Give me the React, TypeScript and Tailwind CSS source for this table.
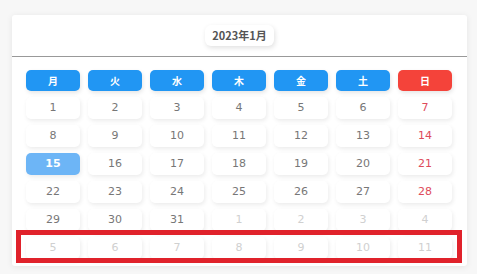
const weekdays = [
  { label: "月", sunday: false },
  { label: "火", sunday: false },
  { label: "水", sunday: false },
  { label: "木", sunday: false },
  { label: "金", sunday: false },
  { label: "土", sunday: false },
  { label: "日", sunday: true },
];

type Day = { n: number; inMonth: boolean };

// 31 days of the month, then next month's days fill out 6 rows
const buildDays = (): Day[] => {
  const days: Day[] = [];
  for (let i = 1; i <= 31; i++) days.push({ n: i, inMonth: true });
  let next = 1;
  while (days.length < 42) days.push({ n: next++, inMonth: false });
  return days;
};

const App = () => {
  const days = buildDays();

  return (
    <div className="h-[274px] w-[477px] overflow-hidden bg-[#f7f7f7] pt-[15px] pl-[12px] font-['DejaVu_Sans','Noto_Sans_CJK_JP',sans-serif]">
      <div className="relative h-[251px] w-[455px] rounded-[3px] bg-white shadow-[0_1px_6px_rgba(0,0,0,0.08)]">
        <div className="flex h-[41px] items-center justify-center">
          <span className="rounded-[6px] bg-white px-[7px] py-[2px] text-[11px] font-bold text-[#555] shadow-[1px_2px_5px_rgba(0,0,0,0.12)] font-['Noto_Sans_CJK_JP',sans-serif]">
            2023年1月
          </span>
        </div>
        <div className="h-[1px] bg-[#999]"></div>

        <div className="grid grid-cols-7 gap-x-[8px] gap-y-[6px] pt-[13px] pl-[14px] pr-[15px]">
          {weekdays.map((w) => (
            <div
              key={w.label}
              className={`flex h-[21px] items-center justify-center rounded-[5px] text-[10px] font-bold text-white shadow-[1px_2px_4px_rgba(0,0,0,0.1)] font-['Noto_Sans_CJK_JP',sans-serif] ${
                w.sunday ? "bg-[#f4433a]" : "bg-[#2196f3]"
              }`}
            >
              {w.label}
            </div>
          ))}
          {days.map((d, i) => {
            const sunday = i % 7 === 6;
            const today = d.inMonth && d.n === 15;
            let cls = "bg-white text-[#777]";
            if (today) cls = "bg-[#6db5f6] text-white font-bold";
            else if (!d.inMonth) cls = "bg-white text-[#d0d0d0]";
            else if (sunday) cls = "bg-white text-[#de4b5b]";
            return (
              <div
                key={i}
                className={`flex h-[22px] items-center justify-center rounded-[5px] text-[11px] shadow-[1px_2px_4px_rgba(0,0,0,0.08)] ${cls}`}
              >
                {d.n}
              </div>
            );
          })}
        </div>
      </div>

      {/* annotation box over the last row */}
      <div className="absolute top-[230px] left-[16px] h-[33px] w-[446px] border-[5px] border-[#e0222b]"></div>
    </div>
  );
};

export default App;
